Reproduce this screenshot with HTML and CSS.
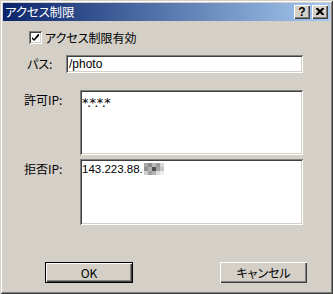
FILE: index.html
```html
<!DOCTYPE html>
<html lang="ja">
<head>
<meta charset="utf-8">
<link rel="stylesheet" href="styles.css">
</head>
<body>
<div class="window">
  <div class="titlebar">
    <span class="title">アクセス制限</span>
    <div class="caption-btns">
      <span class="cap-btn help">?</span>
      <span class="cap-btn close"><svg width="8" height="7" viewBox="0 0 8 7"><path d="M0 0h2l2 2 2-2h2v1l-2.5 2.5L8 6v1H6L4 5 2 7H0V6l2.5-2.5L0 1z" fill="#000"/></svg></span>
    </div>
  </div>
  <div class="content">
    <div class="check-row">
      <span class="checkbox"><svg width="7" height="7" viewBox="0 0 7 7"><path d="M6 0h1v2l-4 4-1 1-2-2V3l2 2z" fill="#000"/></svg></span>
      <span class="label">アクセス制限有効</span>
    </div>
    <div class="row path-row">
      <span class="label path-label">パス:</span>
      <div class="field input">/photo</div>
    </div>
    <div class="row ip-row allow">
      <span class="label ip-label">許可IP:</span>
      <div class="field area area1"><span class="stars">*.*.*.*</span></div>
    </div>
    <div class="row ip-row deny">
      <span class="label ip-label">拒否IP:</span>
      <div class="field area area2">143.223.88.<svg class="mosaic" width="20" height="12" viewBox="0 0 20 12"><rect x="0" y="0" width="4" height="4" fill="#a8a8a8"/><rect x="4" y="0" width="4" height="4" fill="#8c8c8c"/><rect x="8" y="0" width="4" height="4" fill="#b8b8b8"/><rect x="12" y="0" width="4" height="4" fill="#989898"/><rect x="16" y="0" width="4" height="4" fill="#d8d8d8"/><rect x="0" y="4" width="4" height="4" fill="#909090"/><rect x="4" y="4" width="4" height="4" fill="#b0b0b0"/><rect x="8" y="4" width="4" height="4" fill="#505050"/><rect x="12" y="4" width="4" height="4" fill="#a4a4a4"/><rect x="16" y="4" width="4" height="4" fill="#c4c4c4"/><rect x="0" y="8" width="4" height="4" fill="#d0d0d0"/><rect x="4" y="8" width="4" height="4" fill="#a0a0a0"/><rect x="8" y="8" width="4" height="4" fill="#b4b4b4"/><rect x="12" y="8" width="4" height="4" fill="#dcdcdc"/><rect x="16" y="8" width="4" height="4" fill="#ececec"/></svg></div>
    </div>
    <div class="btn-row">
      <span class="btn default"><span class="btn-inner">OK</span></span>
      <span class="btn cancel"><span class="btn-inner">キャンセル</span></span>
    </div>
  </div>
</div>
</body>
</html>
```
FILE: styles.css
```css
html, body {
  margin: 0;
  padding: 0;
  background: #d4d0c8;
}
body {
  font-family: "Noto Sans CJK JP", "Liberation Sans", sans-serif;
  font-size: 12px;
  line-height: 14px;
  color: #000;
  font-feature-settings: "palt" 1;
}
.window {
  width: 333px;
  height: 294px;
  box-sizing: border-box;
  padding: 3px;
  background: #d4d0c8;
  box-shadow: inset 1px 1px 0 #d4d0c8, inset -1px -1px 0 #404040,
              inset 2px 2px 0 #ffffff, inset -2px -2px 0 #808080;
}
.titlebar {
  height: 18px;
  display: flex;
  align-items: center;
  justify-content: space-between;
  background: linear-gradient(to right, #0a246a, #a6caf0);
  padding: 0 2px 0 2px;
}
.title {
  color: #fff;
  font-size: 12.5px;
  letter-spacing: -0.2px;
}
.caption-btns {
  display: flex;
  gap: 2px;
}
.cap-btn {
  width: 16px;
  height: 14px;
  box-sizing: border-box;
  background: #d4d0c8;
  box-shadow: inset 1px 1px 0 #ffffff, inset -1px -1px 0 #404040,
              inset -2px -2px 0 #808080;
  display: flex;
  align-items: center;
  justify-content: center;
}
.help {
  font-family: "Liberation Sans", sans-serif;
  font-weight: bold;
  font-size: 12px;
  line-height: 14px;
  padding-bottom: 1px;
}
.close svg { display: block; margin-top: -1px; }
.content {
  display: flex;
  flex-direction: column;
}
.check-row {
  display: flex;
  align-items: center;
  margin-top: 10px;
  padding-left: 26px;
  gap: 3px;
  height: 13px;
}
.checkbox {
  width: 13px;
  height: 13px;
  box-sizing: border-box;
  background: #fff;
  box-shadow: inset 1px 1px 0 #808080, inset -1px -1px 0 #ffffff,
              inset 2px 2px 0 #404040, inset -2px -2px 0 #d4d0c8;
  display: flex;
  align-items: center;
  justify-content: center;
}
.checkbox svg { display: block; }
.row {
  display: flex;
  align-items: flex-start;
}
.path-row {
  margin-top: 11px;
  padding-left: 24px;
}
.path-label {
  width: 39px;
  padding-top: 2px;
}
.field {
  background: #fff;
  box-sizing: border-box;
  box-shadow: inset 1px 1px 0 #808080, inset -1px -1px 0 #ffffff,
              inset 2px 2px 0 #404040, inset -2px -2px 0 #d4d0c8;
  padding: 2px 3px;
}
.input {
  width: 237px;
  height: 18px;
  line-height: 14px;
  font-family: "Liberation Sans", sans-serif;
}
.ip-row { padding-left: 21px; }
.allow { margin-top: 17px; }
.deny { margin-top: 4px; }
.ip-label {
  width: 56px;
  padding-top: 3px;
}
.area {
  width: 223px;
  font-family: "Liberation Sans", sans-serif;
  font-size: 11.5px;
  padding: 3px 2px;
}
.stars {
  font-family: "DejaVu Sans", sans-serif;
  font-size: 13px;
  letter-spacing: -1.6px;
  vertical-align: -3px;
}
.area1 { height: 65px; }
.area2 { height: 66px; }
.mosaic { vertical-align: -2px; margin-left: 1px; }
.btn-row {
  display: flex;
  margin-top: 37px;
  padding-left: 42px;
  gap: 87px;
}
.btn {
  width: 88px;
  height: 21px;
  box-sizing: border-box;
  background: #d4d0c8;
  display: flex;
}
.btn-inner {
  flex: 1;
  display: flex;
  align-items: center;
  justify-content: center;
  box-shadow: inset 1px 1px 0 #ffffff, inset -1px -1px 0 #404040,
              inset -2px -2px 0 #808080;
}
.default {
  border: 1px solid #000;
}
.cancel { width: 87px; }
```
